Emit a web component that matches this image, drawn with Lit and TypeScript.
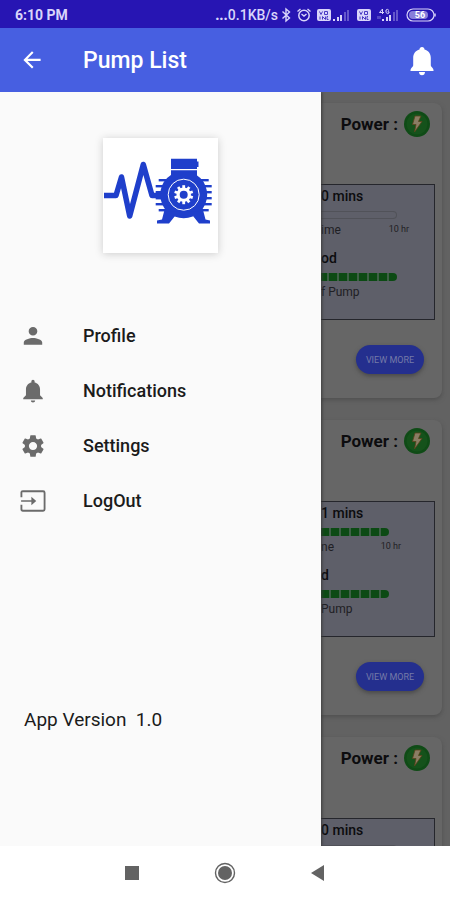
import { LitElement, html, css, svg } from "lit";
import { customElement, property } from "lit/decorators.js";

interface Pump {
  minutes: string;
  timeLabel: string;
  periodLabel: string;
  pumpLabel: string;
  running: boolean;
  narrow: boolean;
  loaded: boolean;
}

const pumps: Pump[] = [
  { minutes: "0 mins", timeLabel: "ime", periodLabel: "od", pumpLabel: "f Pump", running: false, narrow: false, loaded: true },
  { minutes: "1 mins", timeLabel: "ne", periodLabel: "d", pumpLabel: "Pump", running: true, narrow: true, loaded: true },
  { minutes: "0 mins", timeLabel: "", periodLabel: "", pumpLabel: "", running: false, narrow: false, loaded: false },
];

const icons = {
  person: svg`<path d="M12 11.500c2.200 0 4-1.700 4-3.900s-1.800-3.900-4-3.900-4 1.700-4 3.900 1.800 3.900 4 3.900zm0 2.300c-3 0-8.500 1.400-8.500 4.200v2h17v-2c0-2.800-5.500-4.200-8.500-4.200z"/>`,
  bell: svg`<path d="M12 22.500c1.100 0 2-.8 2-1.800h-4c0 1 .9 1.800 2 1.800zm6.500-6.500v-5.500c0-3.100-1.900-5.600-5-6.300V3c0-.8-.7-1.500-1.500-1.500s-1.500.7-1.500 1.500v1.200c-3.100.7-5 3.200-5 6.300V16l-2.500 2.500v1h18v-1L18.500 16z"/>`,
  gear: svg`<path d="M19.43 12.98c.04-.32.07-.64.07-.98s-.03-.66-.07-.98l2.11-1.65c.19-.15.24-.42.12-.64l-2-3.46c-.12-.22-.39-.3-.61-.22l-2.49 1c-.52-.4-1.08-.73-1.69-.98l-.38-2.65C14.46 2.18 14.25 2 14 2h-4c-.25 0-.46.18-.49.42l-.38 2.65c-.61.25-1.17.59-1.69.98l-2.49-1c-.23-.09-.49 0-.61.22l-2 3.46c-.13.22-.07.49.12.64l2.11 1.65c-.04.32-.07.65-.07.98s.03.66.07.98l-2.11 1.65c-.19.15-.24.42-.12.64l2 3.46c.12.22.39.3.61.22l2.490-1c.52.4 1.080.73 1.690.98l.38 2.650c.03.24.24.42.49.42h4c.25 0 .46-.18.49-.42l.38-2.650c.61-.25 1.170-.59 1.690-.98l2.490 1c.23.09.49 0 .61-.22l2-3.460c.12-.22.07-.49-.12-.64l-2.110-1.650zM12 15.800c-2.100 0-3.800-1.700-3.800-3.800s1.700-3.800 3.800-3.800 3.800 1.700 3.800 3.800-1.700 3.800-3.800 3.800z"/>`,
  exit: svg`<path d="M1.300 8.500V4Q1.300 3 2.600 3H21.400Q22.700 3 22.700 4.300V19.700Q22.700 21 21.400 21H2.600Q1.300 21 1.300 19.700V15.500" fill="none" stroke="currentColor" stroke-width="1.700"/><path d="M1 11.200h9.500V8L15 12l-4.500 4v-3.200H1z"/>`,
};

const menu = [
  { label: "Profile", icon: icons.person },
  { label: "Notifications", icon: icons.bell },
  { label: "Settings", icon: icons.gear },
  { label: "LogOut", icon: icons.exit },
];

@customElement("status-bar")
export class StatusBar extends LitElement {
  static styles = css`
    :host {
      display: flex;
      align-items: center;
      height: 28px;
      padding: 2px 14px 0 15px;
      box-sizing: border-box;
      background: #2715b3;
      color: #d9d5fa;
      font-size: 14px;
      font-weight: 700;
    }
    .time { flex: 1; }
    .speed { margin-right: 2px; font-weight: 500; }
    .dots { font-weight: 900; }
    .icon { display: block; fill: currentColor; height: 16px; }
    .gap { margin-left: 4px; }
    .small { font-size: 9px; }
  `;

  private sim() {
    return html`<svg class="icon gap" width="16" height="16" viewBox="0 0 16 16" aria-hidden="true">
      <rect x="1" y="2" width="14" height="12" rx="2" />
      <path d="M3.500 4.500l1.500 3 1.500-3M8.500 7.500v-3h3v3zM4 9.500v3M6.500 12.500v-3l3 3v-3M12 9.500h-1v3h1.500" fill="none" stroke="#4a3bc4" stroke-width="1" />
    </svg>`;
  }

  private signal(fourG: boolean) {
    const x = fourG ? 6 : 1;
    return html`<svg class="icon ${fourG ? "gap" : ""}" width=${fourG ? 26 : 20} height="16" viewBox="0 0 ${fourG ? 26 : 20} 16" aria-hidden="true">
      <rect x=${x} y="12" width="2" height="2" />
      <rect x=${x + 4} y="10" width="2" height="4" />
      <rect x=${x + 7} y="8" width="2" height="6" />
      <rect x=${x + 11} y="5" width="2" height="9" opacity="0.350" />
      <rect x=${x + 14} y="3" width="2" height="11" opacity="0.350" />
      ${fourG
        ? svg`<path d="M6.500 7V2L3.500 5.500H8M13 3.500Q11.500 1.500 10 3V5.500Q11.500 7.500 13 6V4.800H11.500" fill="none" stroke="currentColor" stroke-width="1"/><path d="M2 12V9M4 12V9" stroke="currentColor" opacity="0.500"/>`
        : ""}
    </svg>`;
  }

  render() {
    return html`
      <span class="time">6:10 PM</span>
      <span class="speed"><span class="dots">...</span>0.1KB/s</span>
      <svg class="icon" width="12" height="16" viewBox="0 0 12 16" aria-hidden="true">
        <path d="M2.500 4.500l7 6.500L6 14V2l3.500 3-7 6.500" fill="none" stroke="currentColor" stroke-width="1.400" />
      </svg>
      <svg class="icon gap" width="16" height="16" viewBox="0 0 16 16" aria-hidden="true">
        <circle cx="8" cy="8.500" r="5.200" fill="none" stroke="currentColor" stroke-width="1.500" />
        <path d="M1.500 4.500L4.500 2M14.500 4.500L11.500 2M5.500 7l2.500 2 2.500-2" fill="none" stroke="currentColor" stroke-width="1.400" />
      </svg>
      ${this.sim()}${this.signal(false)}${this.sim()}${this.signal(true)}
      <svg class="icon gap" width="30" height="16" viewBox="0 0 30 16" role="img" aria-label="Battery">
        <rect x="1" y="2" width="27" height="12" rx="6" fill="none" stroke="currentColor" stroke-width="1.200" />
        <rect x="3" y="4" width="19" height="8" rx="4" opacity="0.550" />
        <path d="M29 6.500v3" stroke="currentColor" stroke-width="1.500" />
        <text class="small" x="14" y="11" text-anchor="middle" fill="#ffffff">56</text>
      </svg>
    `;
  }
}

@customElement("pump-card")
export class PumpCard extends LitElement {
  @property({ attribute: false }) pump!: Pump;

  static styles = css`
    :host {
      display: flex;
      flex-direction: column;
      flex: none;
      box-sizing: border-box;
      height: 295px;
      padding: 8px 7px 24px;
      border-radius: 8px;
      background: #666666;
      box-shadow: 0 2px 4px #505050;
      color: #0c0c0e;
    }
    .power {
      display: flex;
      justify-content: flex-end;
      align-items: center;
      gap: 6px;
      padding-right: 5px;
      margin-bottom: 47px;
      font-size: 17px;
      font-weight: 700;
      line-height: 26px;
    }
    .bolt { display: block; }
    .panel {
      display: flex;
      justify-content: flex-end;
      box-sizing: border-box;
      height: 136px;
      margin-bottom: 25px;
      padding: 1px 25px 0 0;
      border: 1px solid #25262c;
      background: #5e5f69;
    }
    .panel.narrow { padding-right: 33px; }
    .metrics { width: 88px; }
    .narrow .metrics { width: 80px; }
    .value { font-size: 14px; font-weight: 500; line-height: 20px; white-space: nowrap; }
    .title { margin-top: 11px; }
    .meter {
      box-sizing: border-box;
      height: 8px;
      margin: 5px 12px 4px 0;
      border-radius: 0 4px 4px 0;
    }
    .empty { border: 1px solid #515259; border-left: 0; }
    .full { background: repeating-linear-gradient(to left, #0c4a14 0 8px, #3f6047 8px 10px); }
    .caption {
      display: flex;
      justify-content: space-between;
      height: 14px;
      font-size: 12px;
      line-height: 14px;
      color: #1f2024;
    }
    .scale { font-size: 9px; line-height: 12px; }
    .more {
      align-self: flex-end;
      width: 68px;
      height: 29px;
      margin-right: 11px;
      padding: 0;
      border: 0;
      border-radius: 15px;
      background: #242f8e;
      box-shadow: 0 2px 4px #484848;
      color: #757aa8;
      font: 400 9px Roboto, "Liberation Sans", sans-serif;
      white-space: nowrap;
      cursor: pointer;
    }
  `;

  private details(p: Pump) {
    return html`
      <div class="caption"><span>${p.timeLabel}</span><span class="scale">10 hr</span></div>
      <div class="value title">${p.periodLabel}</div>
      <div class="meter full"></div>
      <div class="caption">${p.pumpLabel}</div>
    `;
  }

  render() {
    const p = this.pump;
    return html`
      <div class="power">
        <span>Power :</span>
        <svg class="bolt" width="26" height="26" viewBox="0 0 26 26" aria-hidden="true">
          <circle cx="13" cy="13" r="13" fill="#0f4b16" />
          <circle cx="13" cy="13" r="10.500" fill="#15521b" />
          <path d="M11 5h6l-2.500 5.500H18L10.500 21l1.500-7.500H8.500z" fill="#8b7d64" stroke="#5a431c" stroke-width="0.800" />
        </svg>
      </div>
      <div class="panel ${p.narrow ? "narrow" : ""}">
        <div class="metrics">
          <div class="value">${p.minutes}</div>
          <div class="meter ${p.running ? "full" : "empty"}"></div>
          ${p.loaded ? this.details(p) : ""}
        </div>
      </div>
      ${p.loaded ? html`<button class="more">VIEW MORE</button>` : ""}
    `;
  }
}

@customElement("nav-drawer")
export class NavDrawer extends LitElement {
  static styles = css`
    :host {
      display: flex;
      flex-direction: column;
      box-sizing: border-box;
      padding-top: 46px;
      background: #fafafa;
      color: #1b1b1b;
    }
    .logo {
      display: block;
      align-self: center;
      width: 115px;
      height: 115px;
      margin-bottom: 55px;
      background: #ffffff;
      box-shadow: 0 1px 8px #cccccc;
    }
    .item {
      display: flex;
      align-items: center;
      gap: 37px;
      height: 55px;
      padding-left: 20px;
      color: inherit;
      font-size: 18px;
      font-weight: 500;
      text-decoration: none;
    }
    .icon { display: block; color: #6b6b6b; fill: currentColor; }
    .version {
      margin: 178px 0 0 24px;
      font-size: 19px;
      line-height: 28px;
      white-space: pre;
    }
  `;

  render() {
    const fins = [42, 48, 54, 60, 66, 72];
    const teeth = [0, 36, 72, 108, 144, 180, 216, 252, 288, 324];
    return html`
      <svg class="logo" viewBox="0 0 115 115" role="img" aria-label="Pump">
        <path d="M1 57.500H13L18.500 39L26.700 78L40.300 26.500L49 57.500H58" fill="none" stroke="#1f3fcb" stroke-width="5.500" stroke-linejoin="round" />
        <g fill="#1f3fcb">
          <circle cx="80.700" cy="56.700" r="23.500" />
          <path d="M68 20.700H94V23.500H95.500V29H94V31H68zM68 32.300H94V44H68z" />
          ${fins.map((y) => {
            const reach = y === 42 || y === 72 ? 25 : 28;
            return svg`<rect x=${80.7 - reach} y=${y - 1} width=${reach * 2} height="2.400"/>`;
          })}
          <path d="M62 70L72 78 66 85.500H54V82.500L59 81.500zM99.500 70L90 78 96 85.500H107V82.500L102.500 81.500z" />
        </g>
        <circle cx="80.700" cy="56.700" r="15.500" fill="none" stroke="#ffffff" stroke-width="1" />
        <g fill="#ffffff">
          <circle cx="80.700" cy="56.700" r="7.200" />
          ${teeth.map((a) => svg`<rect x="79.300" y="47.200" width="2.800" height="4" transform="rotate(${a} 80.700 56.700)"/>`)}
        </g>
        <circle cx="80.700" cy="56.700" r="4" fill="#1f3fcb" />
      </svg>
      <nav>
        ${menu.map(
          (m) => html`<a class="item" href="#">
            <svg class="icon" width="26" height="26" viewBox="0 0 24 24" aria-hidden="true">${m.icon}</svg>
            <span>${m.label}</span>
          </a>`,
        )}
      </nav>
      <div class="version">App Version  1.0</div>
    `;
  }
}

@customElement("app-root")
export class AppRoot extends LitElement {
  static styles = css`
    :host {
      display: flex;
      flex-direction: column;
      height: 100vh;
      background: #ffffff;
      font-family: Roboto, "Liberation Sans", sans-serif;
    }
    .bar {
      display: flex;
      align-items: center;
      flex: none;
      box-sizing: border-box;
      height: 64px;
      padding: 2px 14px 0 18px;
      background: #475fe1;
      color: #ffffff;
    }
    .title {
      flex: 1;
      margin: 0 0 0 37px;
      font-size: 23px;
      font-weight: 500;
      line-height: 28px;
    }
    .plain {
      display: block;
      padding: 0;
      border: 0;
      background: none;
      color: inherit;
      cursor: pointer;
    }
    .icon { display: block; fill: currentColor; }
    .body {
      position: relative;
      flex: 1;
      min-height: 0;
      overflow: hidden;
      background: #626262;
    }
    .list {
      display: flex;
      flex-direction: column;
      gap: 22px;
      padding: 11px 8px 0;
    }
    .drawer {
      position: absolute;
      top: 0;
      bottom: 0;
      left: 0;
      width: 321px;
      box-shadow: 1px 0 3px #3c3c3c;
    }
    .system {
      display: flex;
      justify-content: center;
      align-items: center;
      flex: none;
      gap: 69px;
      height: 54px;
      color: #636363;
    }
  `;

  render() {
    return html`
      <status-bar></status-bar>
      <header class="bar">
        <button class="plain" aria-label="Back">
          <svg class="icon" width="28" height="28" viewBox="0 0 24 26">
            <path d="M20 11H7.830l5.590-5.590L12 4l-8 8 8 8 1.410-1.410L7.830 13H20v-2z" />
          </svg>
        </button>
        <h1 class="title">Pump List</h1>
        <button class="plain" aria-label="Alerts">
          <svg class="icon" width="28" height="32" viewBox="0 0 28 32">
            <path d="M14 2c-1.500 0-2.500 1-2.500 2.400C7.500 5.500 5.200 8.500 5.200 13v7.500c0 1.500-2.700 2.500-2.700 4.500v1h23v-1c0-2-2.700-3-2.700-4.500V13c0-4.500-2.300-7.500-6.300-8.600C16.500 3 15.500 2 14 2zM11 27c0 2 1.300 3.300 3 3.300s3-1.300 3-3.300z" />
          </svg>
        </button>
      </header>
      <main class="body">
        <div class="list">${pumps.map((p) => html`<pump-card .pump=${p}></pump-card>`)}</div>
        <nav-drawer class="drawer"></nav-drawer>
      </main>
      <footer class="system">
        <button class="plain" aria-label="Recent apps">
          <svg class="icon" width="24" height="24" viewBox="0 0 24 24"><rect x="5" y="5" width="14" height="14" /></svg>
        </button>
        <button class="plain" aria-label="Home">
          <svg class="icon" width="24" height="24" viewBox="0 0 24 24">
            <circle cx="12" cy="12" r="9.500" fill="none" stroke="currentColor" stroke-width="1.400" />
            <circle cx="12" cy="12" r="7" />
          </svg>
        </button>
        <button class="plain" aria-label="Go back">
          <svg class="icon" width="24" height="24" viewBox="0 0 24 24"><path d="M18 4v16L5 12z" /></svg>
        </button>
      </footer>
    `;
  }
}
